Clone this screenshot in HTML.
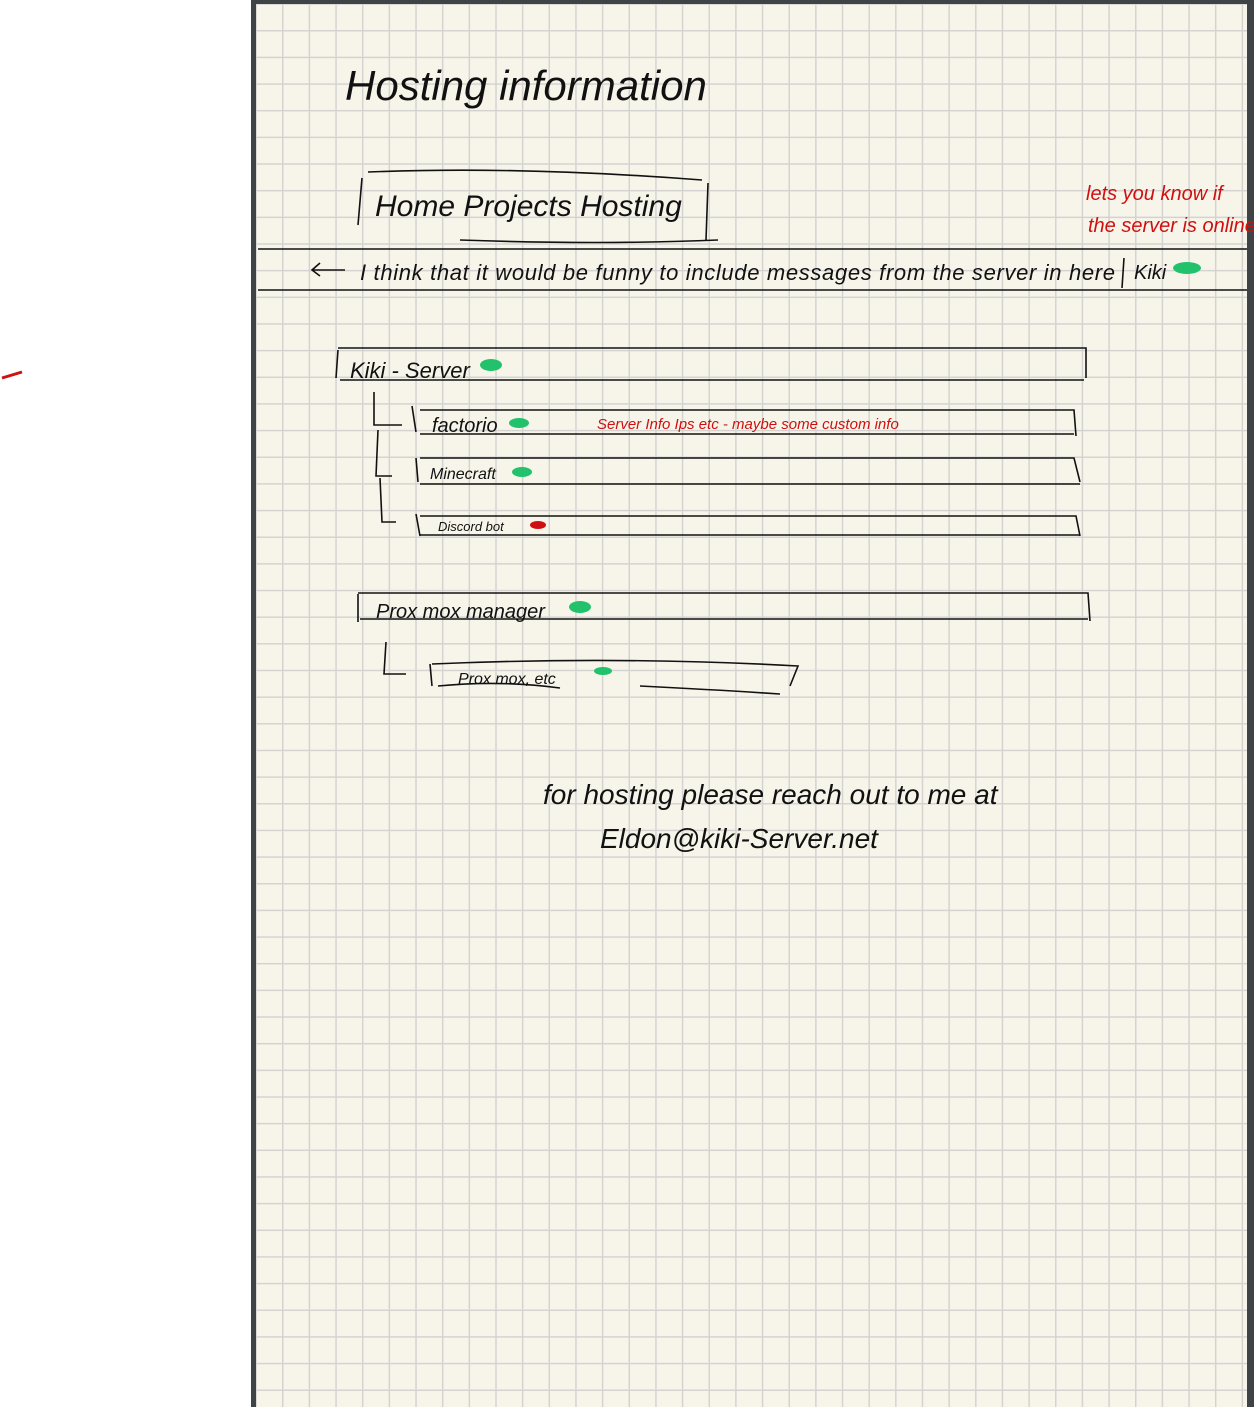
<!DOCTYPE html>
<html><head><meta charset="utf-8"><style>
html,body{margin:0;padding:0;width:1254px;height:1407px;overflow:hidden;background:#fff;position:relative}
.frame{position:absolute;left:251px;top:0;width:1003px;height:1407px;background:#404346}
.paper{position:absolute;left:256px;top:4px;width:991px;height:1403px;background-color:#f7f5ea;
background-image:linear-gradient(to right,#d4d3d2 0,#d4d3d2 1.3px,transparent 1.3px),linear-gradient(to bottom,#d4d3d2 0,#d4d3d2 1.3px,transparent 1.3px);
background-size:26.67px 26.67px;background-position:26px 26px}
svg{position:absolute;left:0;top:0}
text{font-family:"Liberation Sans",sans-serif;font-style:italic}
</style></head><body>
<div class="frame"></div><div class="paper"></div>
<svg width="1254" height="1407" viewBox="0 0 1254 1407">
<g fill="none" stroke="#111" stroke-width="1.6">
<path d="M2 378 L22 372" stroke="#d01010" stroke-width="3"/>
<path d="M362 178 L358 225 M708 183 L706 240 M368 172 Q520 166 702 180 M460 240 Q600 245 718 240"/>
<path d="M258 249 H1247 M258 290 H1247 M1124 258 L1122 288"/>
<path d="M312 270 H345 M320 263 L312 270 L320 276"/>
<path d="M338 350 L336 378 M338 348 H1086 L1086 378 M340 380 H1084"/>
<path d="M374 392 V425 H402 M412 406 L416 432 M420 410 H1074 L1076 436 M420 434 H1074"/>
<path d="M378 430 L376 476 H392 M380 478 L382 522 H396 M416 458 L418 482 M420 458 H1074 L1080 482 M420 484 H1080"/>
<path d="M416 514 L420 536 M420 516 H1076 L1080 536 M420 535 H1080"/>
<path d="M358 594 L358 622 M358 593 H1088 L1090 621 M360 619 H1088"/>
<path d="M386 642 L384 674 H406 M430 664 L432 686 M432 664 Q620 656 798 666 L790 686 M438 686 Q500 680 560 688 M640 686 Q720 690 780 694"/>
</g>
<g fill="#21c26b">
<ellipse cx="1187" cy="268" rx="14" ry="6"/><ellipse cx="491" cy="365" rx="11" ry="6"/>
<ellipse cx="519" cy="423" rx="10" ry="5"/><ellipse cx="522" cy="472" rx="10" ry="5"/>
<ellipse cx="580" cy="607" rx="11" ry="6"/><ellipse cx="603" cy="671" rx="9" ry="4"/>
</g>
<ellipse cx="538" cy="525" rx="8" ry="4" fill="#d01010"/>
<g fill="#111">
<text x="345" y="100" font-size="42">Hosting  information</text>
<text x="375" y="216" font-size="30">Home  Projects  Hosting</text>
<text x="360" y="280" font-size="22" textLength="755">I   think  that it  would  be  funny to include  messages from the server in here</text>
<text x="1134" y="279" font-size="20">Kiki</text>
<text x="350" y="378" font-size="22">Kiki - Server</text>
<text x="432" y="432" font-size="20">factorio</text>
<text x="430" y="479" font-size="16">Minecraft</text>
<text x="438" y="531" font-size="13">Discord  bot</text>
<text x="376" y="618" font-size="20">Prox  mox  manager</text>
<text x="458" y="684" font-size="16">Prox mox, etc</text>
<text x="543" y="804" font-size="28">for  hosting  please  reach  out  to  me  at</text>
<text x="600" y="848" font-size="28">Eldon@kiki-Server.net</text>
</g>
<g fill="#d01010">
<text x="1086" y="200" font-size="20">lets you know if</text>
<text x="1088" y="232" font-size="20">the server is online</text>
<text x="597" y="429" font-size="15">Server  Info  Ips etc   - maybe  some  custom  info</text>
</g>
</svg>
</body></html>
